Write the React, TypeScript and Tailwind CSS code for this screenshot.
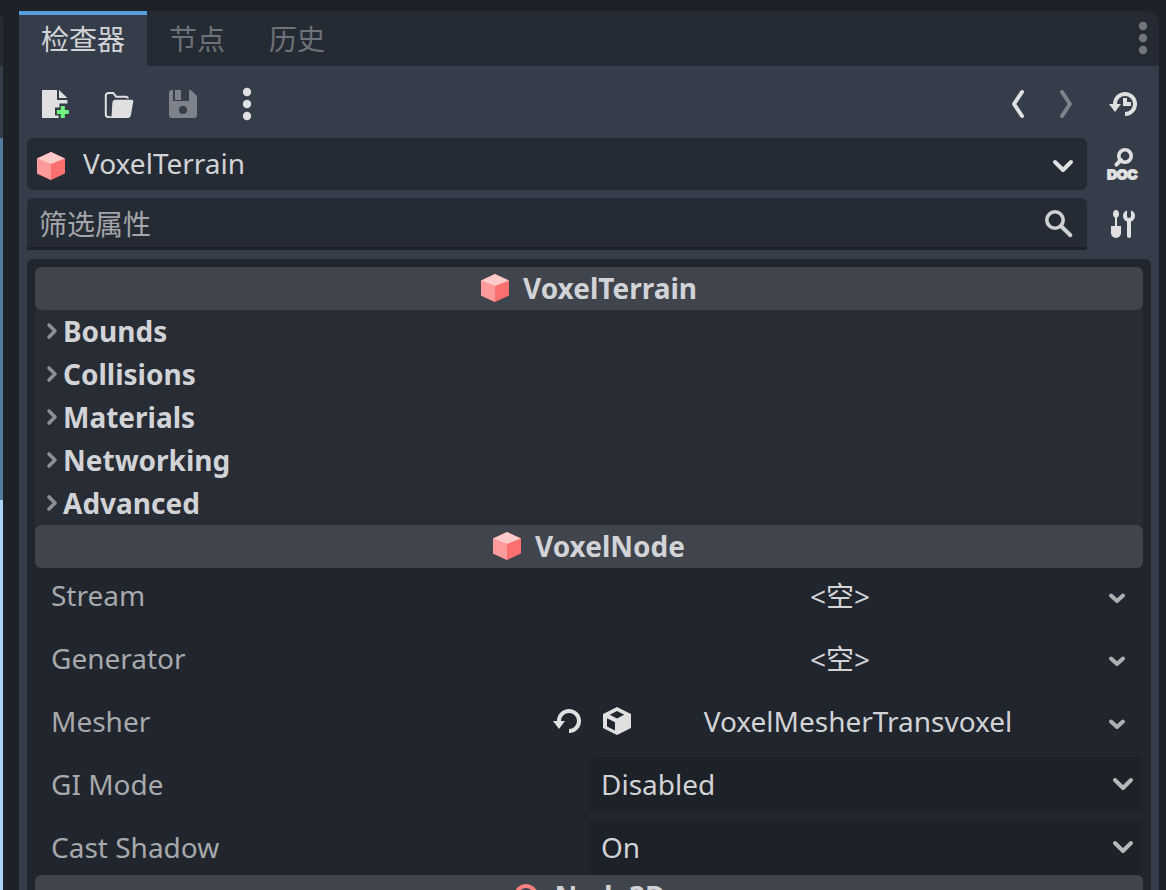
import type { ReactNode } from "react";

type IconProps = { children: ReactNode; className?: string };

function Icon({ children, className = "text-[#e0e0e0]" }: IconProps) {
  return (
    <svg viewBox="0 0 16 16" width="32" height="32" fill="currentColor" aria-hidden="true" className={`shrink-0 overflow-visible ${className}`}>
      {children}
    </svg>
  );
}

function CubeIcon() {
  return (
    <Icon>
      <path d="M8 1 15 4.2v7.6L8 15 1 11.8V4.2z" fill="#fc6f6f" />
      <path d="M1 4.2 8 7v8l-7-3.2z" fill="#ff9b9b" />
      <path d="M8 1l7 3.2L8 7 1 4.2z" fill="#ffcaca" />
    </Icon>
  );
}

function DotsIcon({ className }: { className?: string }) {
  return (
    <Icon className={className}>
      <circle cx="8" cy="2" r="2.1" />
      <circle cx="8" cy="8" r="2.1" />
      <circle cx="8" cy="14" r="2.1" />
    </Icon>
  );
}

function ChevronDown({ small = false, className = "" }: { small?: boolean; className?: string }) {
  return (
    <svg viewBox="0 0 24 24" width="24" height="24" fill="none" stroke="currentColor" strokeWidth="4" strokeLinecap="round" strokeLinejoin="round" aria-hidden="true" className={className}>
      <path d={small ? "M6 9.5l6 5.5 6-5.5" : "M4 8l8 8 8-8"} />
    </svg>
  );
}

function ToolButton({ label, children, disabled }: { label: string; children: ReactNode; disabled?: boolean }) {
  return (
    <button type="button" aria-label={label} disabled={disabled} className="flex size-8 items-center justify-center">
      {children}
    </button>
  );
}

function CategoryHeader({ title, icon }: { title: string; icon: ReactNode }) {
  return (
    <h2 className="flex h-[43px] items-center justify-center gap-3 rounded-md bg-[#40444c] pr-[2px] pb-[2px] font-bold">
      {icon}
      {title}
    </h2>
  );
}

function Group({ title }: { title: string }) {
  return (
    <button type="button" className="flex h-[43px] w-full items-center gap-1 bg-[#272c35] pb-[2px] pl-2 text-left font-bold">
      <svg viewBox="0 0 16 24" width="16" height="24" fill="none" stroke="#8d8f92" strokeWidth="3.6" strokeLinecap="round" strokeLinejoin="round" aria-hidden="true">
        <path d="M6 6l6 6-6 6" />
      </svg>
      {title}
    </button>
  );
}

function Property({ label, action, children }: { label: string; action?: ReactNode; children: ReactNode }) {
  return (
    <div className="grid h-[55px] grid-cols-2">
      <div className="flex items-center justify-between pr-[6px] pb-[2px] pl-4 text-[#a7a9ac]">
        <span>{label}</span>
        {action}
      </div>
      <div className="flex min-w-0">{children}</div>
    </div>
  );
}

function ResourceValue({ name, value, icon }: { name: string; value: string; icon?: ReactNode }) {
  return (
    <>
      <button type="button" className={`flex flex-1 items-center pr-2 pl-3 ${icon ? "pb-[2px]" : ""}`}>
        {icon}
        <span className={`flex-1 text-center ${icon ? "" : "pr-1"}`}>{value}</span>
      </button>
      <button type="button" aria-label={`${name} options`} className="flex w-[52px] items-center justify-center pt-1 text-[#adafb1]">
        <ChevronDown small />
      </button>
    </>
  );
}

function SelectValue({ name, options }: { name: string; options: string[] }) {
  return (
    <div className="grid w-full items-center rounded-md bg-[#1d2128]">
      <select aria-label={name} className="col-start-1 row-start-1 h-[55px] w-full appearance-none bg-transparent px-3 pb-[2px]">
        {options.map((o) => (
          <option key={o}>{o}</option>
        ))}
      </select>
      <ChevronDown className="pointer-events-none col-start-1 row-start-1 mr-2 mb-[2px] justify-self-end text-[#b6b8ba]" />
    </div>
  );
}

const GROUPS = ["Bounds", "Collisions", "Materials", "Networking", "Advanced"];

export default function App() {
  return (
    <div className="flex h-screen gap-4 overflow-hidden bg-[#1d2128] pr-[7px] font-['Noto_Sans','Noto_Sans_CJK_SC',sans-serif] text-[28px] leading-[38px] text-[#d2d3d6]">
      <div className="flex w-[3px] shrink-0 flex-col pt-4" aria-hidden="true">
        <div className="h-[50px] rounded-tr-sm bg-[#252b34]" />
        <div className="h-[72px] bg-[#363d4a]" />
        <div className="h-[362px] bg-[#527d9b]" />
        <div className="flex-1 bg-[#a8d5fc]" />
      </div>

      <section className="mt-[11px] flex min-w-0 flex-1 flex-col">
        <div className="flex h-[55px] shrink-0 items-stretch rounded-tr-xl bg-[#252b34]">
          <div role="tablist" className="flex flex-1 text-[#6f7278]">
            <button type="button" role="tab" aria-selected="true" className="border-t-4 border-[#569eda] bg-[#363d4a] px-[22px] pb-1 text-[#d2d3d6]">
              检查器
            </button>
            <button type="button" role="tab" aria-selected="false" className="px-[22px]">
              节点
            </button>
            <button type="button" role="tab" aria-selected="false" className="px-[22px]">
              历史
            </button>
          </div>
          <button type="button" aria-label="Dock options" className="flex items-center pb-[2px]">
            <DotsIcon className="text-[#737579]" />
          </button>
        </div>

        <div className="flex flex-1 flex-col bg-[#363d4a] px-2">
          <div className="flex h-[72px] items-center justify-between pt-1 pr-3 pl-3">
            <div className="flex gap-8">
              <ToolButton label="New resource">
                <Icon>
                  <path d="M1.500 1H9v5h5.200v1.800h-4v2H8v4h1.800V15H1.500z" />
                  <path d="M10 1l4.200 4H10z" />
                  <path d="M10.900 9h2v2h2v2h-2v2h-2v-2h-2v-2h2z" fill="#6df47c" />
                </Icon>
              </ToolButton>
              <ToolButton label="Open resource">
                <Icon>
                  <path d="M3.8 14.5H2.6a1.2 1.2 0 0 1-1.2-1.2V3.8a1.3 1.3 0 0 1 1.3-1.3h2.5l1.4 1.9h4.6q1.2 0 1.2.9" fill="none" stroke="currentColor" strokeLinejoin="round" />
                  <path d="M6 5.9h8.2a.9.9 0 0 1 .9 1.1l-1.2 6.8a1.4 1.4 0 0 1-1.4 1.2H3.4q.8-.4.9-1.3l.4-6.5A1.4 1.4 0 0 1 6 5.9z" />
                </Icon>
              </ToolButton>
              <ToolButton label="Save resource" disabled>
                <Icon className="text-[#7e838b]">
                  <path fillRule="evenodd" d="M2.500 1H3v5.500h8V1h1l3 3v9.500a1.500 1.500 0 0 1-1.500 1.500h-11A1.500 1.500 0 0 1 1 13.500V2.500A1.500 1.500 0 0 1 2.500 1zM8 9a2 2 0 1 0 0 4 2 2 0 0 0 0-4z" />
                  <path d="M4 1h3v5H4z" />
                </Icon>
              </ToolButton>
              <ToolButton label="More options">
                <DotsIcon />
              </ToolButton>
            </div>
            <div className="flex">
              <div className="flex gap-4">
                <ToolButton label="Previous object">
                  <Icon>
                    <path d="M9.500 2l-4 6 4 6" fill="none" stroke="currentColor" strokeWidth="2" strokeLinecap="round" strokeLinejoin="round" />
                  </Icon>
                </ToolButton>
                <ToolButton label="Next object" disabled>
                  <Icon className="text-[#7e838b]">
                    <path d="M5.500 2l4 6-4 6" fill="none" stroke="currentColor" strokeWidth="2" strokeLinecap="round" strokeLinejoin="round" />
                  </Icon>
                </ToolButton>
              </div>
              <div className="ml-6">
                <ToolButton label="Object history">
                  <Icon>
                    <path d="M4 8a5 5 0 1 1 5 5" fill="none" stroke="currentColor" strokeWidth="2" />
                    <path d="M1 8h6l-3 4zM8 5h2v2h2v2H8z" />
                  </Icon>
                </ToolButton>
              </div>
            </div>
          </div>

          <div className="flex items-center justify-between gap-5 pr-3">
            <div className="grid flex-1 items-center rounded-md bg-[#252b34]">
              <select aria-label="Edited object" className="col-start-1 row-start-1 h-[52px] w-full appearance-none bg-transparent pb-[2px] pl-14">
                <option>VoxelTerrain</option>
              </select>
              <span className="pointer-events-none col-start-1 row-start-1 ml-2 pt-1">
                <CubeIcon />
              </span>
              <ChevronDown className="pointer-events-none col-start-1 row-start-1 mt-1 mr-3 justify-self-end text-[#e0e0e0]" />
            </div>
            <ToolButton label="Open documentation">
              <Icon>
                <path d="M7 6 4.700 8.300" stroke="currentColor" strokeWidth="2" strokeLinecap="round" />
                <circle cx="9" cy="4" r="3.100" fill="none" stroke="currentColor" strokeWidth="1.800" />
                <text x="7.600" y="15.500" textAnchor="middle" fontFamily="Liberation Sans" fontWeight="700" fontSize="6.700" stroke="currentColor" strokeWidth="1">
                  DOC
                </text>
              </Icon>
            </ToolButton>
          </div>

          <div className="mt-2 flex items-center justify-between gap-5 pr-3">
            <label className="flex h-[52px] flex-1 items-center rounded-t-md border-b-3 border-[#1d2128] bg-[#252b34] pr-[14px]">
              <input type="search" placeholder="筛选属性" aria-label="筛选属性" className="h-full w-full bg-transparent pt-[2px] pl-3 outline-none placeholder:text-[#a3a5a9]" />
              <Icon className="text-[#cfd0d2]">
                <circle cx="7" cy="6.500" r="4.100" fill="none" stroke="currentColor" strokeWidth="1.800" />
                <path d="M10 9.500l4.700 4.600" stroke="currentColor" strokeWidth="2" strokeLinecap="round" />
              </Icon>
            </label>
            <ToolButton label="Property tools">
              <Icon>
                <path d="M4.500 1C3.500 1 3 2 3 3c0 .8.300 1.500 1 1.900V9H2v3.500a2.500 2.500 0 0 0 5 0V9H5V4.900c.7-.4 1-1.100 1-1.900 0-1-.5-2-1.500-2z" />
                <path d="M10 1.200A3 3 0 0 0 8 4c0 1.300.8 2.400 2 2.800V14a1 1 0 0 0 2 0V6.800c1.200-.4 2-1.500 2-2.800a3 3 0 0 0-2-2.800V4a1 1 0 0 1-2 0z" />
              </Icon>
            </ToolButton>
          </div>

          <div className="mt-[9px] flex-1 rounded-t-md bg-[#21262e] px-2 pt-2">
            <CategoryHeader title="VoxelTerrain" icon={<CubeIcon />} />
            {GROUPS.map((title) => (
              <Group key={title} title={title} />
            ))}
            <CategoryHeader title="VoxelNode" icon={<CubeIcon />} />
            <div className="flex flex-col gap-2">
              <Property label="Stream">
                <ResourceValue name="Stream" value="<空>" />
              </Property>
              <Property label="Generator">
                <ResourceValue name="Generator" value="<空>" />
              </Property>
              <Property
                label="Mesher"
                action={
                  <ToolButton label="Revert Mesher">
                    <Icon>
                      <path d="M4 8a5 5 0 1 1 5 5" fill="none" stroke="currentColor" strokeWidth="2" />
                      <path d="M1 8h6l-3 4z" />
                    </Icon>
                  </ToolButton>
                }
              >
                <ResourceValue
                  name="Mesher"
                  value="VoxelMesherTransvoxel"
                  icon={
                    <Icon>
                      <path fillRule="evenodd" d="M8 1l7 3.500v7L8 15l-7-3.500v-7zM8 3 4.400 4.900 8 6.800l3.600-1.900zM3 6.600v4.100l4 2V8.600z" />
                    </Icon>
                  }
                />
              </Property>
              <Property label="GI Mode">
                <SelectValue name="GI Mode" options={["Disabled", "Static", "Dynamic"]} />
              </Property>
              <Property label="Cast Shadow">
                <SelectValue name="Cast Shadow" options={["On", "Off", "Double-Sided", "Shadows Only"]} />
              </Property>
            </div>
            <CategoryHeader
              title="Node3D"
              icon={
                <Icon className="text-[#fc7f7f]">
                  <circle cx="8" cy="8" r="5" fill="none" stroke="currentColor" strokeWidth="2" />
                </Icon>
              }
            />
          </div>
        </div>
      </section>
    </div>
  );
}
